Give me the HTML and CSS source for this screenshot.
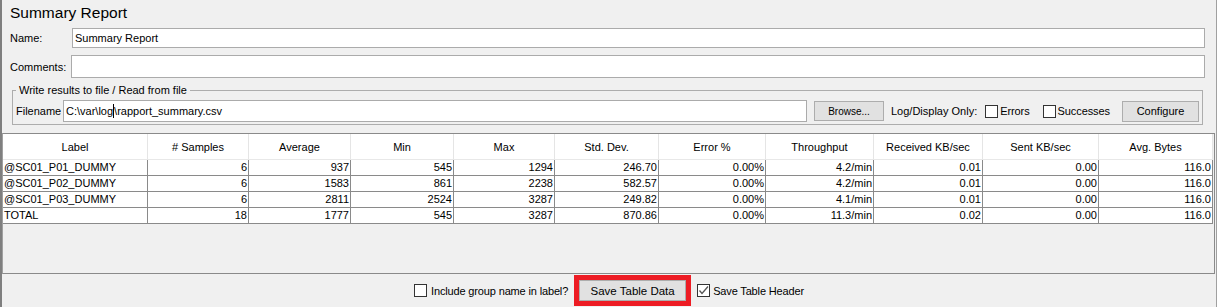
FILE: index.html
```html
<!DOCTYPE html>
<html lang="en">
<head>
    <meta charset="UTF-8">
    <title>Summary Report</title>
    <link rel="stylesheet" href="styles.css">
</head>
<body>
    <div class="frame">
        <div class="title">Summary Report</div>

        <div class="form-row">
            <label>Name:</label>
            <div class="field">Summary Report</div>
        </div>
        <div class="form-row comments-row">
            <label>Comments:</label>
            <div class="field"></div>
        </div>

        <!-- Write results to file -->
        <fieldset class="file-box">
            <legend>Write results to file / Read from file</legend>
            <div class="file-row">
                <span class="file-label">Filename</span>
                <div class="field file-field">C:\var\log<span class="caret"></span>\rapport_summary.csv</div>
                <button class="btn browse">Browse...</button>
                <span class="log-label">Log/Display Only:</span>
                <span class="check first"></span><span class="check-text">Errors</span>
                <span class="check second"></span><span class="check-text">Successes</span>
                <button class="btn configure">Configure</button>
            </div>
        </fieldset>

        <!-- Results table -->
        <div class="table-pane">
            <table class="results">
                <colgroup>
                    <col style="width:145px"><col style="width:101px"><col style="width:102px"><col style="width:103px">
                    <col style="width:101px"><col style="width:104px"><col style="width:107px"><col style="width:108px">
                    <col style="width:109px"><col style="width:116px"><col style="width:114px">
                </colgroup>
                <thead>
                    <tr>
                        <th>Label</th><th># Samples</th><th>Average</th><th>Min</th><th>Max</th><th>Std. Dev.</th>
                        <th>Error %</th><th>Throughput</th><th>Received KB/sec</th><th>Sent KB/sec</th><th>Avg. Bytes</th>
                    </tr>
                </thead>
                <tbody>
                    <tr><td>@SC01_P01_DUMMY</td><td>6</td><td>937</td><td>545</td><td>1294</td><td>246.70</td><td>0.00%</td><td>4.2/min</td><td>0.01</td><td>0.00</td><td>116.0</td></tr>
                    <tr><td>@SC01_P02_DUMMY</td><td>6</td><td>1583</td><td>861</td><td>2238</td><td>582.57</td><td>0.00%</td><td>4.2/min</td><td>0.01</td><td>0.00</td><td>116.0</td></tr>
                    <tr><td>@SC01_P03_DUMMY</td><td>6</td><td>2811</td><td>2524</td><td>3287</td><td>249.82</td><td>0.00%</td><td>4.1/min</td><td>0.01</td><td>0.00</td><td>116.0</td></tr>
                    <tr><td>TOTAL</td><td>18</td><td>1777</td><td>545</td><td>3287</td><td>870.86</td><td>0.00%</td><td>11.3/min</td><td>0.02</td><td>0.00</td><td>116.0</td></tr>
                </tbody>
            </table>
        </div>

        <div class="bottom-bar">
            <span class="check"></span>
            <span class="include-text">Include group name in label?</span>
            <div class="highlight">
                <button class="btn save">Save Table Data</button>
            </div>
            <span class="check checked">
                <svg width="11" height="11" viewBox="0 0 11 11"><polyline points="1.5,5.5 4,8.5 10,1.5" fill="none" stroke="#555" stroke-width="1.3"/></svg>
            </span>
            <span class="header-text">Save Table Header</span>
        </div>
    </div>
</body>
</html>
```

FILE: styles.css
```css
* {
    box-sizing: border-box;
}
body {
    margin: 0;
    background-color: #f0f0f0;
    font-family: "Liberation Sans", Arial, sans-serif;
    font-size: 11px;
    color: #000;
}
.frame {
    width: 1217px;
    height: 307px;
    border-left: 2px solid #7f7f7f;
    border-right: 1px solid #a0a0a0;
    display: flex;
    flex-direction: column;
    overflow: hidden;
}
.title {
    height: 24px;
    padding: 3px 0 0 8px;
    font-size: 15.5px;
    line-height: 20px;
}
.form-row {
    display: flex;
    align-items: center;
    margin: 4px 11px 0 8px;
}
.form-row label {
    width: 62px;
}
.field {
    flex: 1;
    height: 20px;
    background-color: #fff;
    border: 1px solid #ababab;
    padding: 0 2px;
    line-height: 18px;
    white-space: nowrap;
}
.comments-row {
    margin-top: 7px;
}
.comments-row label {
    width: 61px;
}
.comments-row .field {
    height: 23px;
}
.file-box {
    margin: 5px 13px 0 10px;
    padding: 3px 3px 2px 3px;
    border: 1px solid #adadad;
    min-width: 0;
}
.file-box legend {
    padding: 0 3px;
    line-height: 14px;
}
.file-row {
    display: flex;
    align-items: center;
    height: 22px;
}
.file-label {
    width: 47px;
}
.file-field {
    flex: none;
    width: 744px;
    height: 22px;
    line-height: 20px;
}
.caret {
    display: inline-block;
    width: 1px;
    height: 14px;
    background-color: #000;
    vertical-align: -3px;
}
.btn {
    font-family: "Liberation Sans", Arial, sans-serif;
    font-size: 11px;
    color: #000;
    background-color: #e1e1e1;
    border: 1px solid #adadad;
    padding: 0;
}
.browse {
    margin-left: 7px;
    width: 70px;
    height: 20px;
    font-size: 10px;
}
.log-label {
    margin-left: 7px;
}
.check {
    display: inline-flex;
    align-items: center;
    justify-content: center;
    flex: none;
    width: 13px;
    height: 13px;
    background-color: #fff;
    border: 1px solid #333;
}
.check.first {
    margin-left: 8px;
}
.check.second {
    margin-left: 13px;
}
.check-text {
    margin-left: 2px;
    letter-spacing: -0.1px;
}
.configure {
    margin-left: auto;
    width: 77px;
    height: 21px;
}
.table-pane {
    margin: 8px 1px 0 0;
    height: 141px;
    border: 1px solid #8a8a8a;
    border-left-color: #a0a0a0;
    background-color: #f0f0f0;
}
.results {
    table-layout: fixed;
    border-collapse: separate;
    border-spacing: 0;
    width: 1210px;
}
.results th,
.results td {
    box-sizing: border-box;
    overflow: hidden;
    white-space: nowrap;
}
.results th {
    height: 26px;
    background-color: #fff;
    border-right: 1px solid #e5e5e5;
    border-bottom: 1px solid #e8e8e8;
    font-weight: normal;
    text-align: center;
}
.results td {
    height: 16px;
    padding: 0 1px 0 2px;
    line-height: 15px;
    background-color: #fff;
    border-right: 1px solid #8a8a8a;
    border-bottom: 1px solid #8a8a8a;
    text-align: right;
}
.results td:first-child {
    text-align: left;
    padding-left: 1px;
}
.bottom-bar {
    flex: 1;
    display: flex;
    justify-content: center;
    align-items: center;
    letter-spacing: -0.15px;
}
.include-text {
    margin-left: 4px;
}
.highlight {
    margin-left: 6px;
    border: 5px solid #ed1c24;
    display: flex;
}
.save {
    width: 107px;
    height: 21px;
    font-size: 11.5px;
}
.check.checked {
    margin-left: 6px;
}
.header-text {
    margin-left: 3px;
}
```
